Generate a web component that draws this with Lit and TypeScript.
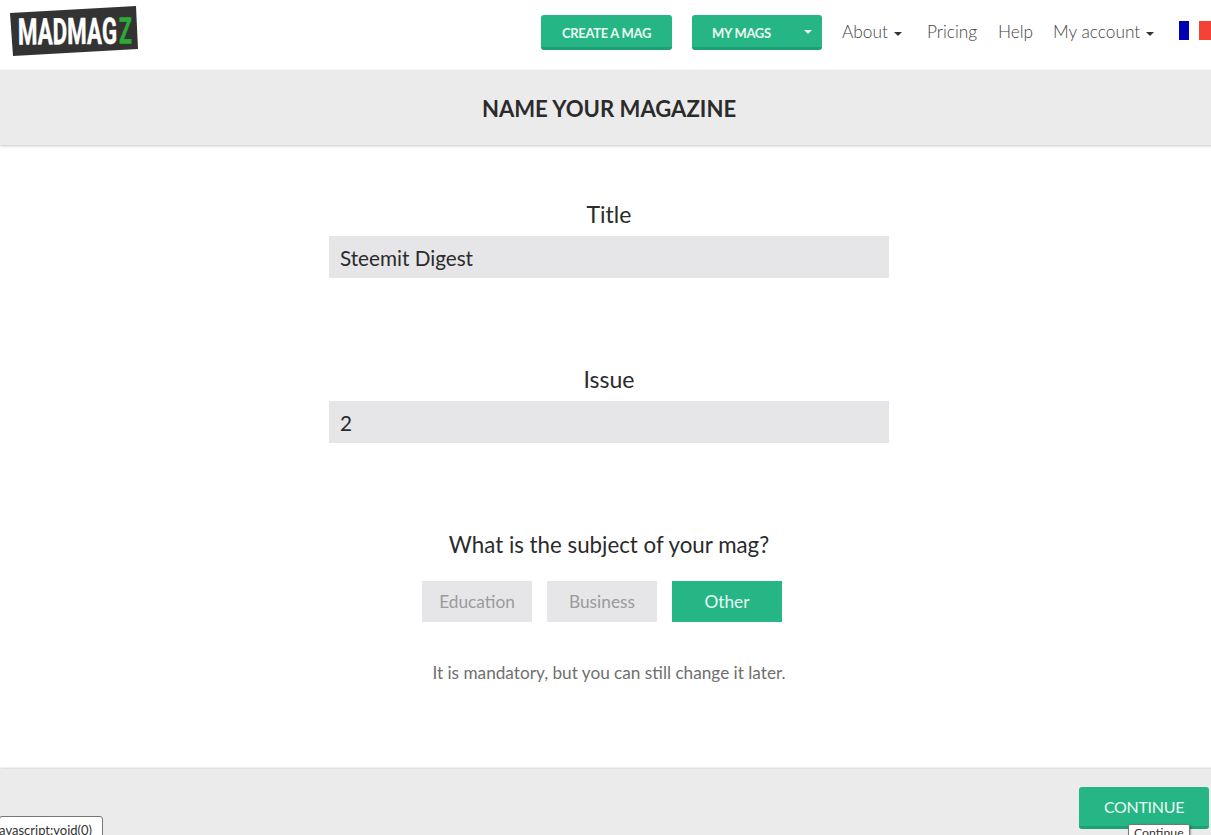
import { LitElement, html, css } from "lit";
import { customElement } from "lit/decorators.js";

@customElement("app-root")
export class AppRoot extends LitElement {
  static styles = css`
    :host { display: block; width: 100%; height: 100vh; overflow: hidden; position: relative; font-family: "Lato", "Liberation Sans", sans-serif; color: #2b2b2b; background: #fff; }
    .page { width: 1218px; height: 835px; display: flex; flex-direction: column; }
    nav { height: 70px; width: 1211px; flex: none; display: flex; align-items: flex-start; }
    .logo { margin: 5px 0 0 10px; width: 130px; height: 52px; flex: none; display: block; }
    .logo text { font-family: "Roboto", "Liberation Sans", sans-serif; font-weight: 700; font-size: 36.5px; stroke-width: 0.5px; }
    .logo .w { stroke: #fff; }
    .logo .g { stroke: #2ea836; }
    .links { margin-left: auto; display: flex; align-items: flex-start; padding-top: 15px; }
    .btn { background: #26b584; color: #eafaf4; border-bottom: 3px solid #1f9f74; border-radius: 3px; box-sizing: border-box; font-weight: 700; font-size: 13px; letter-spacing: -0.3px; height: 35px; padding-top: 3px; display: flex; align-items: center; justify-content: center; }
    .create { width: 131px; margin-right: 20px; }
    .mags { width: 130px; margin-right: 20px; justify-content: flex-start; padding-left: 20px; }
    .mags i { margin-left: auto; margin-right: 10px; margin-top: -2px; border-top: 4px solid #eafaf4; border-left: 4px solid transparent; border-right: 4px solid transparent; }
    .link { font-weight: 300; font-size: 17.3px; color: #444; height: 33px; white-space: nowrap; display: flex; align-items: center; }
    .link i { margin-left: 6px; margin-top: 5px; border-top: 4px solid #333; border-left: 4px solid transparent; border-right: 4px solid transparent; }
    .about { width: 85px; }
    .pricing { width: 71px; }
    .help { width: 55px; }
    .account { width: 126px; }
    .flag { display: flex; width: 32px; height: 19px; margin-top: 6px; flex: none; }
    .flag span { flex: none; width: 10px; }
    .flag .b { background: #0000b4; } .flag .wh { background: #fff; } .flag .r { background: #f44336; width: 12px; }
    .head { height: 75px; flex: none; box-sizing: border-box; padding-top: 2px; background: #ecebec; box-shadow: 0 1px 3px rgba(0,0,0,.22); display: flex; align-items: center; justify-content: center; font-weight: 700; font-size: 22.1px; color: #2b2b2b; position: relative; }
    main { flex: 1; display: flex; flex-direction: column; align-items: center; padding-top: 54px; }
    label { font-size: 23px; line-height: 31px; height: 31px; margin-bottom: 6px; }
    .input { width: 560px; height: 42px; box-sizing: border-box; background: #e6e6e8; padding: 0 11px; font-size: 20.7px; line-height: 44px; margin-bottom: 86px; }
    label.q { font-size: 22.3px; margin-bottom: 21px; }
    .opts { display: flex; gap: 15px; margin-bottom: 36px; margin-right: 14px; }
    .opt { width: 110px; height: 41px; background: #e6e6e8; color: #9a9a9a; font-size: 17.3px; display: flex; align-items: center; justify-content: center; }
    .opt.on { background: #26b584; color: #eafaf4; }
    .note { font-size: 17.2px; color: #6f6f6f; line-height: 30px; }
    footer { height: 66px; flex: none; background: #ecebec; box-shadow: 0 -1px 2px rgba(0,0,0,.18); display: flex; justify-content: flex-end; align-items: flex-start; padding: 18px 9px 0 0; box-sizing: border-box; position: relative; }
    .continue { width: 130px; height: 42px; background: #26b584; color: #eafaf4; border-bottom: 3px solid #1f9f74; border-radius: 3px; box-sizing: border-box; font-size: 16px; letter-spacing: -0.3px; display: flex; align-items: center; justify-content: center; }
    .tip { position: absolute; background: #fff; border: 1px solid #767676; color: #333; white-space: nowrap; box-sizing: border-box; overflow: hidden; }
    .status { left: -1px; top: 816px; height: 30px; width: 104px; border-radius: 3px; font-size: 13px; line-height: 26px; text-indent: -4px; }
    .hint { left: 1128px; top: 824px; height: 20px; width: 62px; border-radius: 2px; padding-left: 5px; line-height: 16px; font-size: 12.3px; box-shadow: 1px 1px 2px rgba(0,0,0,.3); }
  `;

  render() {
    return html`
      <div class="page">
        <nav>
          <svg class="logo" viewBox="0 0 130 52" aria-label="MADMAGZ">
            <polygon points="0,8 126,1 128,44 3,51" fill="#333"></polygon>
            <g transform="rotate(-0.5 65 26)">
              <text class="w" x="8" y="39" textLength="99" lengthAdjust="spacingAndGlyphs" fill="#fff">MADMAG</text>
              <text class="g" x="109" y="39" textLength="13" lengthAdjust="spacingAndGlyphs" fill="#2ea836">Z</text>
            </g>
          </svg>
          <div class="links">
            <div class="btn create">CREATE A MAG</div>
            <div class="btn mags">MY MAGS<i></i></div>
            <div class="link about">About<i></i></div>
            <div class="link pricing">Pricing</div>
            <div class="link help">Help</div>
            <div class="link account">My account<i></i></div>
            <div class="flag"><span class="b"></span><span class="wh"></span><span class="r"></span></div>
          </div>
        </nav>
        <div class="head">NAME YOUR MAGAZINE</div>
        <main>
          <label>Title</label>
          <div class="input">Steemit Digest</div>
          <label>Issue</label>
          <div class="input">2</div>
          <label class="q">What is the subject of your mag?</label>
          <div class="opts">
            <div class="opt">Education</div>
            <div class="opt">Business</div>
            <div class="opt on">Other</div>
          </div>
          <div class="note">It is mandatory, but you can still change it later.</div>
        </main>
        <footer><div class="continue">CONTINUE</div></footer>
      </div>
      <div class="tip status">javascript:void(0)</div>
      <div class="tip hint">Continue</div>
    `;
  }
}
